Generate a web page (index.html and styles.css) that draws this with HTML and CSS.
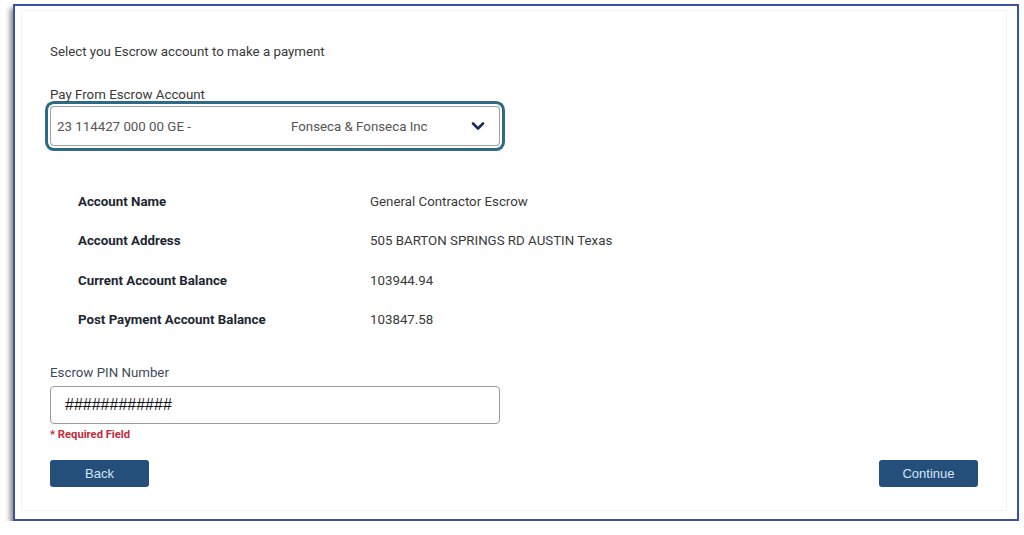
FILE: index.html
```html
<!DOCTYPE html>
<html lang="en">
<head>
  <meta charset="UTF-8">
  <meta name="viewport" content="width=device-width, initial-scale=1.0">
  <title>Escrow Payment</title>
  <link rel="stylesheet" href="styles.css">
</head>
<body>
  <div class="frame">
    <div class="panel">
      <p class="intro">Select you Escrow account to make a payment</p>

      <div class="field">
        <label class="field-label">Pay From Escrow Account</label>
        <div class="select-box">
          <span class="acct-no">23 114427 000 00 GE -</span>
          <span class="acct-owner">Fonseca &amp; Fonseca Inc</span>
          <svg class="chevron" width="14" height="10" viewBox="0 0 14 10">
            <path d="M2 2.5 L7 7.5 L12 2.5" fill="none" stroke="#1c2d5e" stroke-width="2.6" stroke-linecap="round" stroke-linejoin="round"/>
          </svg>
        </div>
      </div>

      <div class="details">
        <div class="d-label">Account Name</div>
        <div class="d-value">General Contractor Escrow</div>
        <div class="d-label">Account Address</div>
        <div class="d-value">505 BARTON SPRINGS RD AUSTIN Texas</div>
        <div class="d-label">Current Account Balance</div>
        <div class="d-value">103944.94</div>
        <div class="d-label">Post Payment Account Balance</div>
        <div class="d-value">103847.58</div>
      </div>

      <div class="field pin-field">
        <label class="field-label pin-label" for="pin">Escrow PIN Number</label>
        <div class="pin-box" id="pin">############</div>
        <div class="required">* Required Field</div>
      </div>

      <div class="actions">
        <button class="btn">Back</button>
        <button class="btn">Continue</button>
      </div>
    </div>
  </div>
</body>
</html>
```

FILE: styles.css
```css
body {
  margin: 0;
  background: #ffffff;
  font-family: Roboto, "Liberation Sans", Arial, sans-serif;
  color: #333;
}
.frame {
  margin: 4px 0 0 13px;
  width: 1002px;
  height: 513px;
  border: 2px solid #3b51a3;
  background: #fff;
  box-shadow: -3px 4px 5px rgba(0, 0, 0, 0.45);
}
.panel {
  margin: 4px 10px 8px 6px;
  height: 501px;
  border: 1px solid #f6f1f5;
  box-sizing: border-box;
  padding: 33px 0 0 28px;
}
.intro {
  margin: 0;
  font-size: 13.3px;
  line-height: 16px;
  color: #3a3a3a;
}
.field {
  margin-top: 27px;
}
.field-label {
  display: block;
  font-size: 13.3px;
  line-height: 16px;
  color: #3a3a3a;
}
.select-box {
  margin-top: 3px;
  width: 450px;
  height: 40px;
  box-sizing: border-box;
  border: 1px solid #9aa3a6;
  border-radius: 4px;
  box-shadow: 0 0 0 2px #fff, 0 0 0 5px #2d6a83;
  display: flex;
  align-items: center;
  padding-left: 6px;
  font-size: 13.3px;
  color: #555;
}
.acct-no {
  width: 234px;
}
.acct-owner {
  width: 180px;
}
.details {
  margin-top: 48px;
  padding-left: 28px;
  display: grid;
  grid-template-columns: 292px auto;
  grid-auto-rows: 39.4px;
  font-size: 13.3px;
  line-height: 16px;
}
.d-label {
  font-weight: bold;
  color: #1d2733;
}
.d-value {
  color: #3a3a3a;
}
.pin-field {
  margin-top: 13px;
}
.pin-label {
  color: #3d4b5c;
}
.pin-box {
  margin-top: 5px;
  width: 450px;
  height: 38px;
  box-sizing: border-box;
  border: 1px solid #9a9a9a;
  border-radius: 4px;
  padding-left: 14px;
  display: flex;
  align-items: center;
  font-family: "Liberation Sans", Arial, sans-serif;
  font-size: 16px;
  color: #111;
}
.required {
  margin-top: 4px;
  font-size: 11.2px;
  line-height: 14px;
  font-weight: bold;
  color: #c42a3c;
}
.actions {
  margin-top: 18px;
  width: 928px;
  display: flex;
  justify-content: space-between;
}
.btn {
  width: 99px;
  height: 27px;
  border: none;
  border-radius: 3px;
  background: #244f7b;
  color: #d4e4f4;
  font-family: "Liberation Sans", Arial, sans-serif;
  font-size: 13px;
  cursor: pointer;
}
```
